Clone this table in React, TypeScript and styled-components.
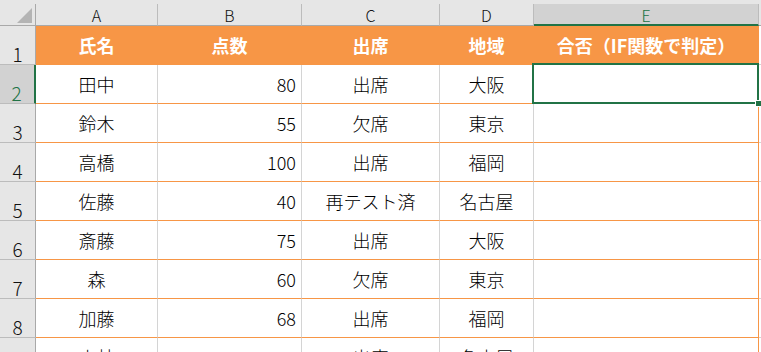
import React from 'react';
import styled, { createGlobalStyle, css } from 'styled-components';

const GREEN = '#217346';
const ORANGE = '#f79646';
const HEAD_BG = '#e6e6e6';
const HEAD_SEL = '#d2d2d2';

const GlobalStyle = createGlobalStyle`
  html, body {
    margin: 0;
    padding: 0;
    background: #ffffff;
    overflow: hidden;
  }
  * {
    box-sizing: border-box;
  }
`;

const Page = styled.div`
  width: 761px;
  height: 352px;
  overflow: hidden;
  background: #ffffff;
  font-family: "Noto Sans CJK JP", "Noto Sans", sans-serif;
  color: #000;
`;

const TopStrip = styled.div`
  height: 4px;
  background: ${HEAD_BG};
`;

const Sheet = styled.div`
  display: grid;
  grid-template-columns: 36px 122px 144px 138px 94px 225px 1fr;
  grid-template-rows: 22px repeat(9, 39px);
`;

const Corner = styled.div`
  background: ${HEAD_BG};
  border-right: 1px solid #a9a9a9;
  border-bottom: 1px solid #a9a9a9;
  display: flex;
  align-items: flex-end;
  justify-content: flex-end;
  padding: 0 3px 2px 0;
`;

const ColHead = styled.div<{ $selected?: boolean }>`
  background: ${(p) => (p.$selected ? HEAD_SEL : HEAD_BG)};
  border-right: 1px solid #bcbcbc;
  border-bottom: ${(p) => (p.$selected ? `2px solid ${GREEN}` : '1px solid #a9a9a9')};
  color: ${(p) => (p.$selected ? GREEN : '#111')};
  font-size: 16px;
  font-weight: 300;
  line-height: 20px;
  text-align: center;
  padding-top: 1px;
`;

const RowHead = styled.div<{ $selected?: boolean }>`
  background: ${(p) => (p.$selected ? HEAD_SEL : HEAD_BG)};
  border-right: ${(p) => (p.$selected ? `2px solid ${GREEN}` : '1px solid #a9a9a9')};
  border-bottom: 1px solid #bcbcbc;
  color: ${(p) => (p.$selected ? GREEN : '#111')};
  font-size: 19px;
  font-weight: 300;
  line-height: 1;
  display: flex;
  align-items: flex-end;
  justify-content: center;
  padding: 0 ${(p) => (p.$selected ? 1 : 0)}px 1px 0;
`;

const Cell = styled.div<{
  $title?: boolean;
  $right?: boolean;
  $edge?: boolean;
  $selected?: boolean;
}>`
  position: relative;
  display: flex;
  align-items: center;
  justify-content: ${(p) => (p.$right ? 'flex-end' : 'center')};
  padding: 0 ${(p) => (p.$right ? 5 : 0)}px 0 0;
  font-size: 18px;
  font-weight: 300;
  white-space: nowrap;
  border-bottom: 1px solid ${ORANGE};
  border-right: 1px solid ${(p) => (p.$edge ? ORANGE : '#d4d4d4')};
  ${(p) =>
    p.$title &&
    css`
      background: ${ORANGE};
      color: #ffffff;
      font-weight: 700;
      border-right-color: ${ORANGE};
    `}
  ${(p) =>
    p.$selected &&
    css`
      &::after {
        content: '';
        position: absolute;
        top: -2px;
        left: -2px;
        right: -1px;
        bottom: -1px;
        border: 2px solid ${GREEN};
        z-index: 2;
      }
    `}
`;

const Handle = styled.span`
  position: absolute;
  right: -4px;
  bottom: -4px;
  width: 7px;
  height: 7px;
  background: ${GREEN};
  border: 1px solid #ffffff;
  z-index: 3;
`;

const Filler = styled.div<{ $head?: boolean }>`
  background: ${(p) => (p.$head ? HEAD_BG : '#ffffff')};
  border-bottom: 1px solid ${(p) => (p.$head ? '#a9a9a9' : '#d4d4d4')};
`;

const columns = ['A', 'B', 'C', 'D', 'E'];

const header = ['氏名', '点数', '出席', '地域', '合否（IF関数で判定）'];

const rows: [string, string, string, string][] = [
  ['田中', '80', '出席', '大阪'],
  ['鈴木', '55', '欠席', '東京'],
  ['高橋', '100', '出席', '福岡'],
  ['佐藤', '40', '再テスト済', '名古屋'],
  ['斎藤', '75', '出席', '大阪'],
  ['森', '60', '欠席', '東京'],
  ['加藤', '68', '出席', '福岡'],
  ['小林', '90', '出席', '名古屋'],
];

const CornerMark = () => (
  <svg width="15" height="15" viewBox="0 0 15 15">
    <polygon points="15,0 15,15 0,15" fill="#b4b4b4" />
  </svg>
);

export default function App() {
  return (
    <Page>
      <GlobalStyle />
      <TopStrip />
      <Sheet>
        <Corner>
          <CornerMark />
        </Corner>
        {columns.map((c) => (
          <ColHead key={c} $selected={c === 'E'}>
            {c}
          </ColHead>
        ))}
        <Filler $head />

        <RowHead>1</RowHead>
        {header.map((h, i) => (
          <Cell key={h} $title $edge={i === 4}>
            {h}
          </Cell>
        ))}
        <Filler />

        {rows.map((r, ri) => (
          <React.Fragment key={ri}>
            <RowHead $selected={ri === 0}>{ri + 2}</RowHead>
            <Cell>{r[0]}</Cell>
            <Cell $right>{r[1]}</Cell>
            <Cell>{r[2]}</Cell>
            <Cell>{r[3]}</Cell>
            <Cell $edge $selected={ri === 0}>
              {ri === 0 && <Handle />}
            </Cell>
            <Filler />
          </React.Fragment>
        ))}
      </Sheet>
    </Page>
  );
}
